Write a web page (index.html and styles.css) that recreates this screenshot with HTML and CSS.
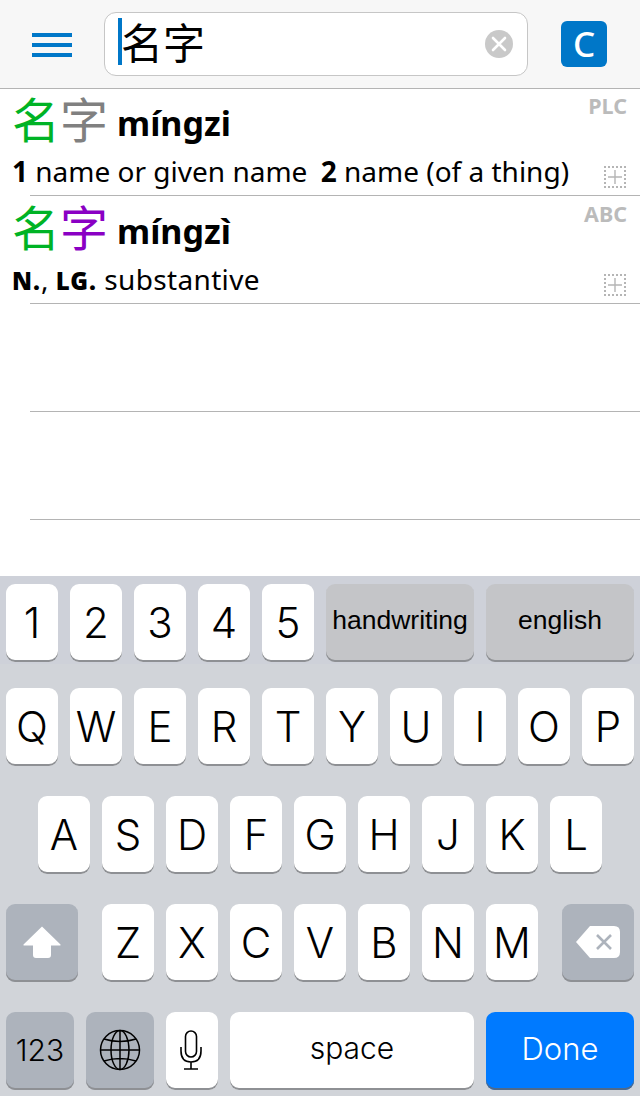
FILE: index.html
```html
<!DOCTYPE html>
<html lang="zh">
<head>
<meta charset="utf-8">
<title>Dictionary</title>
<link rel="stylesheet" href="styles.css">
</head>
<body>
<div class="app">
  <header class="topbar">
    <div class="menu"><span></span><span></span><span></span></div>
    <div class="search">
      <span class="caret"></span>
      <span class="query">名字</span>
      <svg class="clear" width="28" height="28" viewBox="0 0 28 28"><circle cx="14" cy="14" r="14" fill="#c9c9c9"/><path d="M8 8L20 20M20 8L8 20" stroke="#fff" stroke-width="2.6" stroke-linecap="round"/></svg>
    </div>
    <div class="cbtn">C</div>
  </header>
  <main class="list">
    <section class="entry">
      <div class="head">
        <h2 class="word"><span class="hz green">名</span><span class="hz grey">字</span><span class="pinyin">míngzi</span></h2>
        <span class="tag">PLC</span>
      </div>
      <div class="def">
        <p class="text"><b>1</b> name or given name <b class="sense">2</b> name (of a thing)</p>
        <span class="add"><svg width="14" height="14" viewBox="0 0 14 14"><path d="M7 0V14M0 7H14" stroke="#b5b5b5" stroke-width="1.4"/></svg></span>
      </div>
    </section>
    <div class="rule"></div>
    <section class="entry">
      <div class="head">
        <h2 class="word"><span class="hz green">名</span><span class="hz purple">字</span><span class="pinyin">míngzì</span></h2>
        <span class="tag">ABC</span>
      </div>
      <div class="def">
        <p class="text"><b class="sc">N.</b>, <b class="sc">LG.</b> <span class="sub">substantive</span></p>
        <span class="add"><svg width="14" height="14" viewBox="0 0 14 14"><path d="M7 0V14M0 7H14" stroke="#b5b5b5" stroke-width="1.4"/></svg></span>
      </div>
    </section>
    <div class="rule"></div>
    <section class="entry"></section>
    <div class="rule"></div>
    <section class="entry"></section>
    <div class="rule"></div>
  </main>
  <div class="keyboard">
    <div class="accessory">
      <div class="key">1</div><div class="key">2</div><div class="key">3</div><div class="key">4</div><div class="key">5</div>
      <div class="key wide mode">handwriting</div><div class="key wide mode">english</div>
    </div>
    <div class="letters">
      <div class="krow">
        <div class="key">Q</div><div class="key">W</div><div class="key">E</div><div class="key">R</div><div class="key">T</div><div class="key">Y</div><div class="key">U</div><div class="key">I</div><div class="key">O</div><div class="key">P</div>
      </div>
      <div class="krow center">
        <div class="key">A</div><div class="key">S</div><div class="key">D</div><div class="key">F</div><div class="key">G</div><div class="key">H</div><div class="key">J</div><div class="key">K</div><div class="key">L</div>
      </div>
      <div class="krow between">
        <div class="key fn side"><svg width="38" height="32" viewBox="0 0 38 32"><path d="M19 .5L37.500 18.500Q38 19.500 37 19.500H28V29Q28 32 25 32H13Q10 32 10 29V19.500H1Q0 19.500 .5 18.500Z" fill="#fff"/></svg></div>
        <div class="group">
          <div class="key">Z</div><div class="key">X</div><div class="key">C</div><div class="key">V</div><div class="key">B</div><div class="key">N</div><div class="key">M</div>
        </div>
        <div class="key fn side"><svg width="44" height="32" viewBox="0 0 44 32"><path d="M14 0H38Q44 0 44 6V26Q44 32 38 32H14L0 16Z" fill="#fff"/><path d="M21 9L35 23M35 9L21 23" stroke="#adb3bc" stroke-width="2.6"/></svg></div>
      </div>
      <div class="krow">
        <div class="key fn fnw small">123</div>
        <div class="key fn fnw"><svg width="42" height="42" viewBox="0 0 42 42" fill="none" stroke="#000" stroke-width="1.5"><circle cx="21" cy="21" r="19.500"/><ellipse cx="21" cy="21" rx="9" ry="19.500"/><path d="M21 1.500V40.500M1.500 21H40.500M5 10Q21 15 37 10M5 32Q21 27 37 32"/></svg></div>
        <div class="key"><svg class="mic" width="22" height="40" viewBox="0 0 22 40" fill="none" stroke="#000" stroke-width="1.6"><rect x="5.500" y="1" width="11" height="26" rx="5.500"/><path d="M1 17V21Q1 32 11 32Q21 32 21 21V17M11 32V39M4 39H18"/></svg></div>
        <div class="key space">space</div>
        <div class="key wide done">Done</div>
      </div>
    </div>
  </div>
</div>
</body>
</html>
```
FILE: styles.css
```css
* { box-sizing: border-box; margin: 0; padding: 0; }
html, body { height: 100%; overflow: hidden; }
body { background: #fff; font-family: "Noto Sans", "Noto Sans CJK SC", sans-serif; color: #000; }
.app { width: 640px; height: 1096px; display: flex; flex-direction: column; }

.topbar { flex: none; height: 89px; background: #f7f7f7; border-bottom: 1px solid #b4b4b4; display: flex; align-items: flex-start; padding: 12px 33px 0 32px; }
.menu { width: 40px; height: 24px; margin-top: 21px; display: flex; flex-direction: column; justify-content: space-between; flex: none; }
.menu span { height: 4px; background: #0077c8; display: block; }
.search { width: 424px; height: 64px; margin-left: 32px; background: #fff; border: 1px solid #c6c6c6; border-radius: 12px; display: flex; align-items: center; padding: 0 14px 0 13px; flex: none; }
.caret { width: 4px; height: 47px; background: #0077c8; flex: none; margin-top: -6px; }
.query { font-family: "Noto Sans CJK SC", sans-serif; font-size: 42px; line-height: 60px; flex: 1; margin-left: -1px; margin-top: -6px; }
.clear { flex: none; }
.cbtn { width: 46px; height: 46px; margin: 9px 0 0 33px; background: #0077c8; border-radius: 6px; color: #fff; font-size: 35px; font-weight: 500; line-height: 46px; text-align: center; flex: none; }

.list { margin-top: -1px; }
.entry { height: 107px; padding: 0 14px 0 12px; }
.rule { height: 1px; margin-left: 30px; background: #b4b4b4; }
.head { display: flex; justify-content: space-between; align-items: flex-start; height: 61px; }
.word { display: flex; align-items: flex-start; font-weight: 400; height: 61px; }
.hz { font-family: "Noto Sans CJK SC", sans-serif; font-size: 48px; line-height: 58px; }
.green { color: #00b325; }
.grey { color: #808080; }
.purple { color: #8a00c4; }
.pinyin { font-size: 34px; font-weight: 700; margin-left: 9px; line-height: 70px; }
.tag { font-size: 21.5px; font-weight: 700; color: #bbb; line-height: 26px; margin: 5px -1px 0 0; }
.def { display: flex; justify-content: space-between; align-items: flex-start; height: 44px; }
.text { font-size: 28px; line-height: 44px; height: 44px; white-space: nowrap; }
.text b { font-weight: 700; }
.sense { margin-left: 6px; }
.sc { font-size: 24px; font-weight: 900 !important; letter-spacing: 1px; }
.sub { letter-spacing: .35px; }
.add { width: 22px; height: 22px; margin-top: 17px; border: 2px dotted #b5b5b5; display: flex; align-items: center; justify-content: center; flex: none; }

.keyboard { margin-top: auto; height: 520px; flex: none; background: #d1d4d9; font-family: Inter, "Liberation Sans", Arial, sans-serif; }
.accessory { height: 88px; background: #ced1d9; display: flex; gap: 12px; padding: 8px 6px 0; }
.letters { display: flex; flex-direction: column; gap: 30px; padding: 24px 6px 0; }
.krow { display: flex; gap: 12px; }
.center { justify-content: center; }
.between { justify-content: space-between; }
.group { display: flex; gap: 12px; }
.key { width: 52px; height: 78px; padding-bottom: 2px; background: #fff; border-radius: 9px; box-shadow: inset 0 -2px 0 #8e9094; display: flex; align-items: center; justify-content: center; font-size: 42px; font-weight: 300; flex: none; }
.key > svg { flex: none; }
.mic { margin-right: 2px; }
.wide { width: 148px; }
.mode { background: #c4c5c8; font-size: 26.5px; font-weight: 400; font-family: "Liberation Sans", Arial, sans-serif; padding-bottom: 6px; }
.fn { background: #adb3bc; }
.side { width: 72px; }
.fnw { width: 68px; }
.small { font-size: 30px; }
.space { width: 244px; font-size: 30px; font-weight: 300; padding-bottom: 6px; }
.done { background: #007aff; color: #fff; font-size: 31px; font-weight: 300; box-shadow: inset 0 -2px 0 #4f6a8a; padding-bottom: 6px; }
```
